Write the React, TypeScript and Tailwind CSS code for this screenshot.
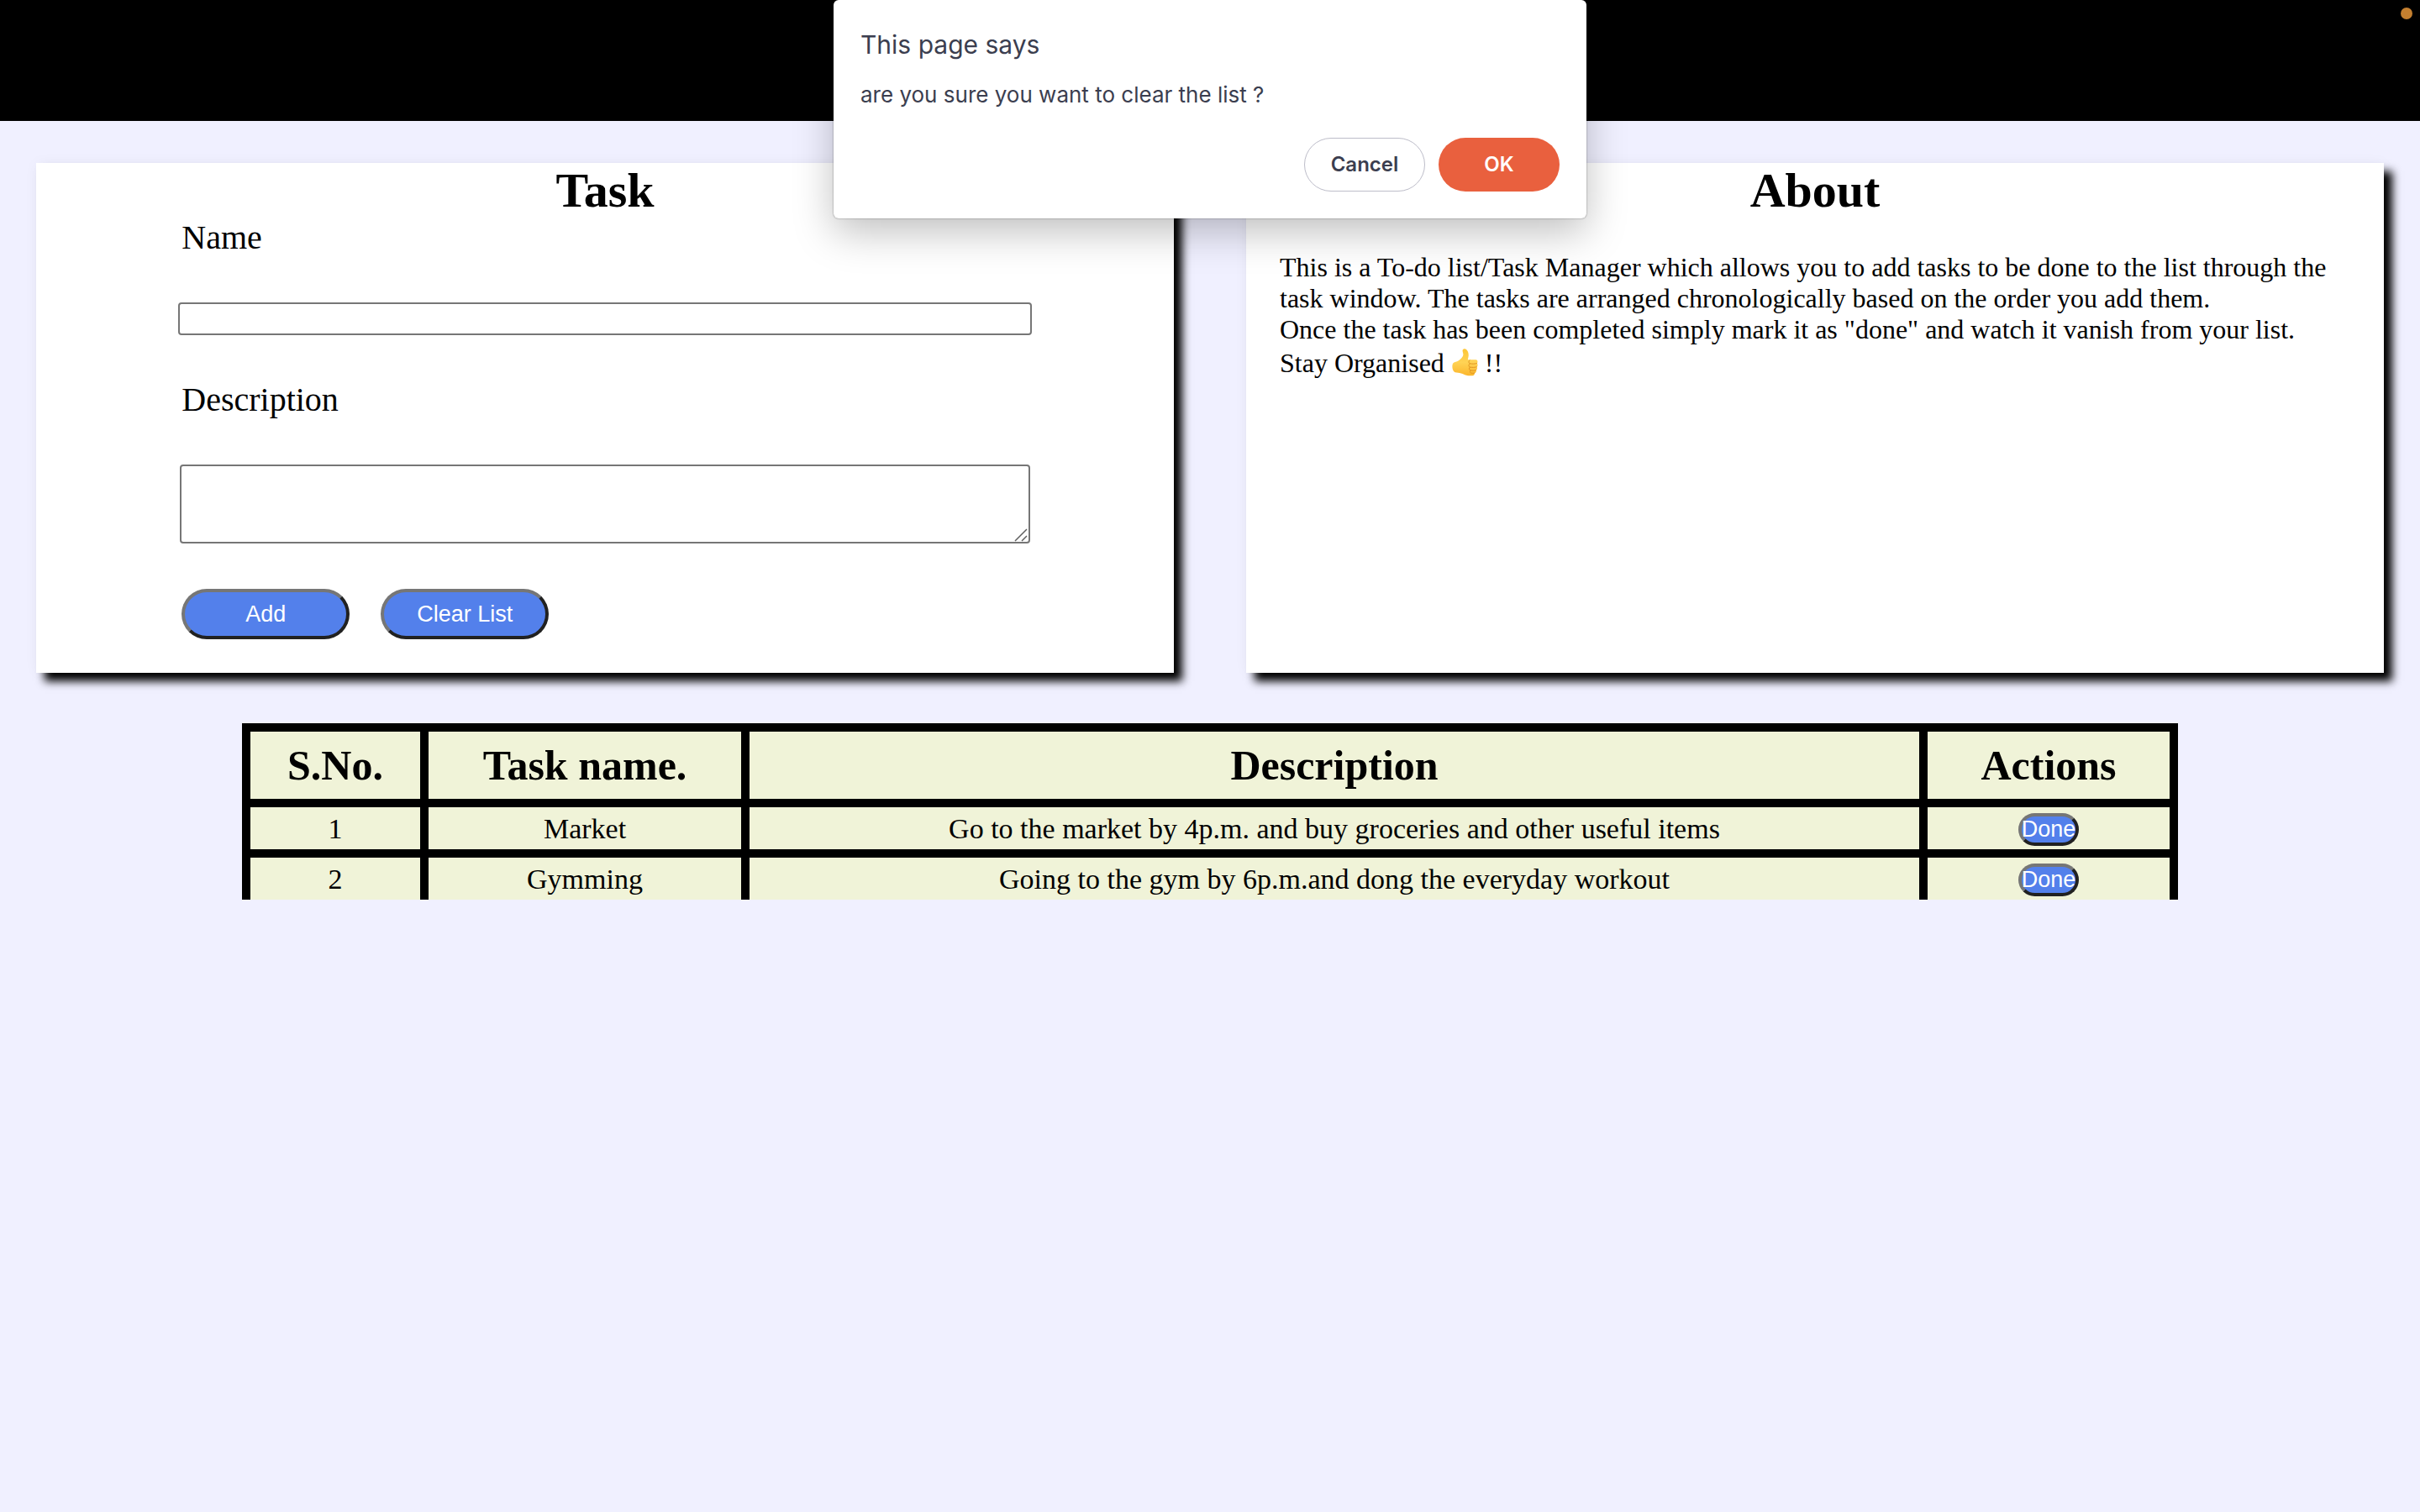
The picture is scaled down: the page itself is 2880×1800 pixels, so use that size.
import React from "react";

type Task = { name: string; description: string };

const tasks: Task[] = [
  { name: "Market", description: "Go to the market by 4p.m. and buy groceries and other useful items" },
  { name: "Gymming", description: "Going to the gym by 6p.m.and dong the everyday workout" },
];

const cardClass =
  "min-w-0 flex-1 bg-white shadow-[10px_10px_10px_#000,0_0_16px_rgba(0,0,0,0.04)]";

const blueButton =
  "rounded-full border-4 border-t-[#767676] border-l-[#767676] border-r-[#212121] border-b-[#212121] bg-[#5380eb] font-['Liberation_Sans',sans-serif] text-[27px] leading-[31px] text-white";

function ThumbsUp() {
  return (
    <svg
      role="img"
      aria-label="thumbs up"
      viewBox="0 7 32 34"
      className="inline-block h-[34px] w-8 align-[-5px]"
    >
      <defs>
        <linearGradient id="skin" x1="0" y1="0" x2="0" y2="1">
          <stop offset="0" stopColor="#fdc636" />
          <stop offset="0.5" stopColor="#ffd355" />
          <stop offset="1" stopColor="#fbb62c" />
        </linearGradient>
      </defs>
      <path
        fill="url(#skin)"
        d="M2.400 25.200c1.800-1.500 4.300-1.500 6.100-2.700 2.900-1.900 5.400-4.700 5.800-6.800.4-2-1.200-4.200-.6-6 .5-1.700 2.700-2 4.100-.9 2.200 1.700 3.100 5 2.900 7.700-.1 1.800-.7 3.300-.9 4.700l9.700.1c1.900.1 2.700 3 1.200 4.300 1.300 1 1.100 3.400-.2 4.200.9 1.100.5 3.200-.8 3.900.6 1.500-.2 3.200-1.800 3.600.1 1.800-.9 2.900-2.700 3-2.700.2-5.700 0-8.200-.8-2.400-.9-4.300-2.200-7-2.600-2.200-.3-5 0-6.800-1.700-2.100-2.200-2.400-7.800-.8-10z"
      />
      <g fill="none" stroke="#dd8f1c" strokeWidth="0.900" strokeLinecap="round">
        <path d="M30.500 25.500c-2.400.9-5.500.8-8.100.3-1.700-.4-2.100-3-.3-4" />
        <path d="M30.300 29.800c-2.300.8-5.300.7-7.800.3-1.900-.4-2-3.200-.3-4.200" />
        <path d="M29.500 33.700c-1.900.6-4.500.6-6.600.2-1.800-.4-2-2.900-.5-3.800" />
        <path d="M27.700 37.200c-1.500.2-3.100.1-4.200-.2-1.400-.5-1.500-2.200-.2-3" />
      </g>
    </svg>
  );
}

function TaskCard() {
  return (
    <section className={cardClass}>
      <h1 className="text-center text-[58px] leading-[66px] font-bold">Task</h1>
      <form className="mx-auto flex w-3/4 flex-col pb-10" onSubmit={(e) => e.preventDefault()}>
        <label htmlFor="name" className="ml-1 text-[40px] leading-[46px]">
          Name
        </label>
        <input
          id="name"
          type="text"
          className="mt-[54px] h-[39px] rounded-[4px] border-2 border-[#767676] bg-white px-1 font-['Liberation_Sans',sans-serif] text-[27px]"
        />
        <label htmlFor="description" className="mt-[54px] ml-1 text-[40px] leading-[46px]">
          Description
        </label>
        <textarea
          id="description"
          className="mx-0.5 mt-[54px] h-[94px] resize-none rounded-[4px] border-2 border-[#767676] bg-white px-1 font-['Liberation_Mono',monospace] text-[27px]"
        />
        <div className="relative">
          <svg
            aria-hidden="true"
            viewBox="0 0 16 16"
            className="pointer-events-none absolute right-[5px] bottom-0.5 size-4"
          >
            <path d="M1 15L15 1M9 15l6-6" stroke="#5f5f5f" strokeWidth="1.500" />
          </svg>
        </div>
        <div className="mt-[54px] ml-1 flex gap-[37px]">
          <button type="submit" className={`${blueButton} h-[60px] w-[200px]`}>
            Add
          </button>
          <button type="button" className={`${blueButton} h-[60px] w-[200px]`}>
            Clear List
          </button>
        </div>
      </form>
    </section>
  );
}

function AboutCard() {
  return (
    <section className={cardClass}>
      <h1 className="text-center text-[58px] leading-[66px] font-bold">About</h1>
      <div className="mt-10 px-10 text-[32px] leading-[37px]">
        <p>
          This is a To-do list/Task Manager which allows you to add tasks to be done to the list
          through the task window. The tasks are arranged chronologically based on the order you
          add them.
        </p>
        <p>
          Once the task has been completed simply mark it as "done" and watch it vanish from your
          list.
        </p>
        <p className="leading-[43px]">
          Stay Organised <ThumbsUp /> !!
        </p>
      </div>
    </section>
  );
}

function TaskTable() {
  const head = "border-10 border-black h-[90px] p-0 text-[50px] leading-[57px] font-bold";
  const cell = "border-10 border-b-0 border-black p-0";
  return (
    <table className="mx-auto mt-[60px] w-4/5 table-fixed border-collapse bg-[#f0f3d8] text-center text-[34px] leading-[39px]">
      <colgroup>
        <col className="w-[212px]" />
        <col className="w-[382px]" />
        <col />
        <col className="w-[298px]" />
      </colgroup>
      <thead>
        <tr>
          <th scope="col" className={head}>S.No.</th>
          <th scope="col" className={head}>Task name.</th>
          <th scope="col" className={head}>Description</th>
          <th scope="col" className={head}>Actions</th>
        </tr>
      </thead>
      <tbody>
        {tasks.map((task, i) => (
          <tr key={task.name} className="h-[60px] last:h-[55px]">
            <td className={cell}>{i + 1}</td>
            <td className={cell}>{task.name}</td>
            <td className={cell}>{task.description}</td>
            <td className={cell}>
              <button type="button" className={`${blueButton} mx-auto mt-0.5 block`}>
                Done
              </button>
            </td>
          </tr>
        ))}
      </tbody>
    </table>
  );
}

function ConfirmDialog() {
  return (
    <div
      role="dialog"
      aria-labelledby="dialog-title"
      aria-describedby="dialog-message"
      className="absolute top-0 left-1/2 w-[896px] -translate-x-1/2 rounded-[6px] bg-white px-8 pt-8 pb-8 font-[Inter,sans-serif] text-[#3b3e4f] shadow-[0_0_2px_rgba(0,0,0,0.5),0_16px_48px_rgba(0,0,0,0.25)]"
    >
      <h2 id="dialog-title" className="text-[30px] leading-[42px]">
        This page says
      </h2>
      <p id="dialog-message" className="mt-5 text-[26px] leading-[38px]">
        are you sure you want to clear the list ?
      </p>
      <div className="mt-8 flex justify-end gap-4 text-[24px] leading-[32px] font-semibold">
        <button type="button" className="h-16 w-36 rounded-full border border-[#bdbdc9] bg-white">
          Cancel
        </button>
        <button type="button" className="h-16 w-36 rounded-full bg-[#e9603e] text-white">
          OK
        </button>
      </div>
    </div>
  );
}

export default function App() {
  return (
    <div className="relative min-h-screen bg-[#f0f0ff] font-['Liberation_Serif',serif] text-black">
      <header className="h-36 bg-black">
        <span className="absolute top-[9px] right-[9px] size-[14px] rounded-full bg-[#c47f2f]" />
      </header>
      <main>
        <div className="flex gap-[86px] px-[43px] pt-[50px]">
          <TaskCard />
          <AboutCard />
        </div>
        <TaskTable />
      </main>
      <ConfirmDialog />
    </div>
  );
}
